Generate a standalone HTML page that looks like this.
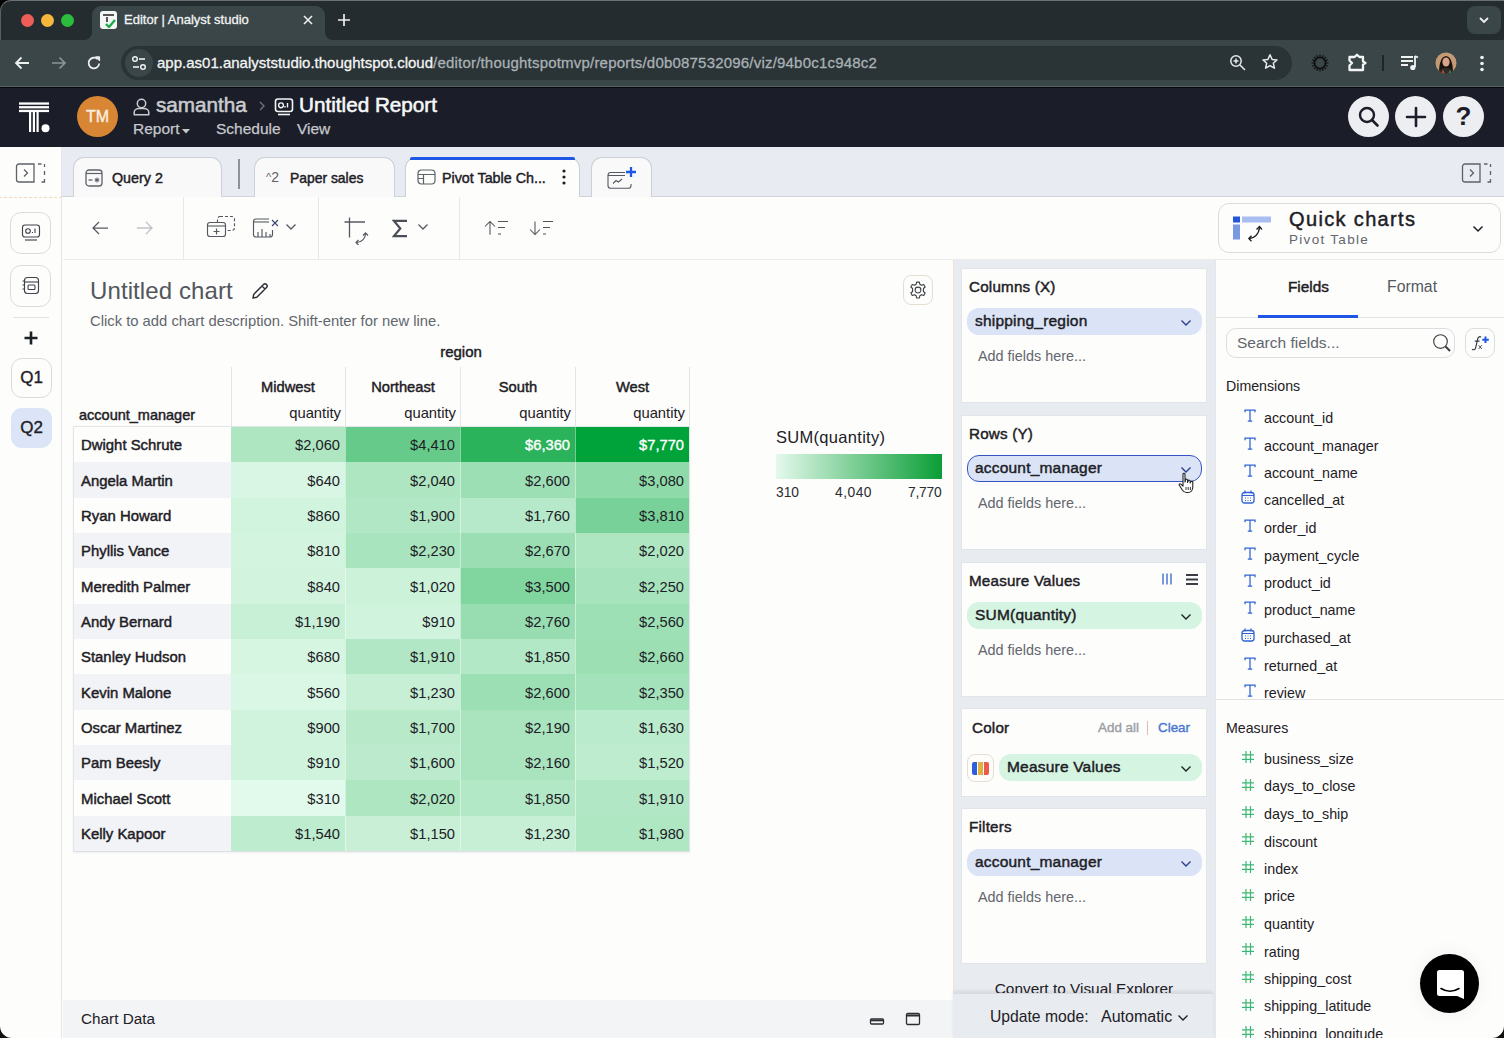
<!DOCTYPE html>
<html><head><meta charset="utf-8">
<style>
*{box-sizing:border-box;margin:0;padding:0}
html,body{width:1504px;height:1038px;overflow:hidden;background:#fdfdfc;font-family:"Liberation Sans",sans-serif;color:#1d2025}
.a{position:absolute}
svg{display:block}
/* browser chrome */
#tabbar{left:0;top:0;width:1504px;height:40px;background:#232b2e}
#toolbar{left:0;top:40px;width:1504px;height:47px;background:#3b4649;border-bottom:1px solid #56626a}
#apphdr{left:0;top:87px;width:1504px;height:60px;background:#1b1e28}
#tabsrow{left:62px;top:147px;width:1442px;height:50px;background:#e8ebf1;border-bottom:1px solid #d0d5dc}
#sidebar{left:0;top:147px;width:62px;height:891px;background:#fdfdfc;border-right:1px solid #e3e6ea}
#tbar{left:63px;top:197px;width:1441px;height:63px;background:#fdfdfc;border-bottom:1px solid #e9ebef}
#chart{left:63px;top:260px;width:890px;height:740px;background:#fdfdfc}
#chartdata{left:63px;top:1000px;width:890px;height:38px;background:#f3f4f6}
#midpanel{left:953px;top:260px;width:262px;height:778px;background:#e8ebf0}
#rightpanel{left:1215px;top:260px;width:289px;height:778px;background:#fdfdfc;border-left:1px solid #e3e6ea}

.nm{font-size:14.9px;color:#1d2025;white-space:nowrap;-webkit-text-stroke:0.45px #1d2025}
.cv{font-size:14.7px;text-align:right;padding-right:5px;white-space:nowrap}
.hd{font-size:14.7px;color:#1d2025;white-space:nowrap;-webkit-text-stroke:0.45px #1d2025}
.qt{font-size:14.8px;color:#1d2025;text-align:right;white-space:nowrap}
.lg{font-size:13.8px;color:#2a2d33;white-space:nowrap}

.ct{font-size:15.2px;letter-spacing:0.2px;color:#1d2025;white-space:nowrap;-webkit-text-stroke:0.45px #1d2025}
.pl{font-size:15.5px;letter-spacing:0.2px;color:#1d2025;white-space:nowrap;-webkit-text-stroke:0.45px #1d2025}
.af{font-size:14.4px;color:#62666d;white-space:nowrap;line-height:18px}
.fl{font-size:14.3px;color:#1d2025;white-space:nowrap;line-height:18px}
</style></head><body>

<div id="tabbar" class="a">
  <div class="a" style="left:0;top:0;width:14px;height:14px;background:#000"></div>
  <div class="a" style="left:0;top:0;width:1504px;height:60px;background:#242c30;border-top:1px solid #6a7174;border-left:1px solid #596063;border-top-left-radius:11px"></div>
  <div class="a" style="left:21px;top:14px;width:13px;height:13px;border-radius:50%;background:#ee5e56"></div>
  <div class="a" style="left:41px;top:14px;width:13px;height:13px;border-radius:50%;background:#f6b73d"></div>
  <div class="a" style="left:61px;top:14px;width:13px;height:13px;border-radius:50%;background:#2bbd3b"></div>
  <!-- active tab -->
  <div class="a" style="left:84px;top:32px;width:8px;height:8px;background:#3b4649"></div>
  <div class="a" style="left:76px;top:24px;width:16px;height:16px;background:#242c30;border-bottom-right-radius:8px"></div>
  <div class="a" style="left:325px;top:32px;width:8px;height:8px;background:#3b4649"></div>
  <div class="a" style="left:325px;top:24px;width:16px;height:16px;background:#242c30;border-bottom-left-radius:8px"></div>
  <div class="a" style="left:92px;top:6px;width:233px;height:34px;background:#3b4649;border-radius:9px 9px 0 0"></div>
  <div class="a" style="left:100px;top:11px;width:17px;height:18px;background:#f4f5f5;border-radius:3px">
    <div class="a" style="left:3px;top:3px;width:11px;height:2px;background:#555"></div>
    <div class="a" style="left:6px;top:6px;width:2px;height:5px;background:#555"></div>
    <svg class="a" style="left:5px;top:8px" width="11" height="9" viewBox="0 0 11 9"><path d="M1 5 L4 8 L10 1" stroke="#1fa94b" stroke-width="2.4" fill="none"/></svg>
  </div>
  <div class="a" style="left:124px;top:12px;font-size:13px;color:#f2f4f4;white-space:nowrap;-webkit-text-stroke:0.3px #f2f4f4">Editor | Analyst studio</div>
  <svg class="a" style="left:302px;top:14px" width="12" height="12" viewBox="0 0 12 12"><path d="M2 2L10 10M10 2L2 10" stroke="#eef0f0" stroke-width="1.6"/></svg>
  <svg class="a" style="left:337px;top:13px" width="14" height="14" viewBox="0 0 14 14"><path d="M7 1V13M1 7H13" stroke="#eef0f0" stroke-width="1.7"/></svg>
  <div class="a" style="left:1467px;top:6px;width:34px;height:28px;background:#3b4649;border-radius:8px"></div>
  <svg class="a" style="left:1478px;top:15px" width="12" height="10" viewBox="0 0 12 10"><path d="M2 3L6 7L10 3" stroke="#eef0f0" stroke-width="1.8" fill="none"/></svg>
</div>
<div id="toolbar" class="a">
  <svg class="a" style="left:14px;top:16px" width="16" height="14" viewBox="0 0 16 14"><path d="M15 7H2M7.5 1.5L2 7L7.5 12.5" stroke="#eef0f0" stroke-width="1.8" fill="none"/></svg>
  <svg class="a" style="left:51px;top:16px" width="16" height="14" viewBox="0 0 16 14"><path d="M1 7H14M8.5 1.5L14 7L8.5 12.5" stroke="#8d9699" stroke-width="1.6" fill="none"/></svg>
  <svg class="a" style="left:86px;top:15px" width="16" height="16" viewBox="0 0 16 16"><path d="M13.2 8.5A5.3 5.3 0 1 1 11.6 4.2" stroke="#eef0f0" stroke-width="1.8" fill="none"/><path d="M9.5 1.8H13.6V5.9Z" fill="#eef0f0" stroke="#eef0f0" stroke-width="1"/></svg>
  <div class="a" style="left:121px;top:6px;width:1171px;height:34px;background:#2a3336;border-radius:17px"></div>
  <div class="a" style="left:125px;top:9px;width:28px;height:28px;background:#3b4649;border-radius:50%"></div>
  <svg class="a" style="left:131px;top:15px" width="16" height="16" viewBox="0 0 16 16"><circle cx="4" cy="4" r="2.3" stroke="#eef0f0" stroke-width="1.5" fill="none"/><path d="M8 4H14" stroke="#eef0f0" stroke-width="1.6"/><circle cx="12" cy="12" r="2.3" stroke="#eef0f0" stroke-width="1.5" fill="none"/><path d="M2 12H8" stroke="#eef0f0" stroke-width="1.6"/></svg>
  <div class="a" style="left:157px;top:14px;font-size:15px;color:#f3f5f5;white-space:nowrap;line-height:18px;-webkit-text-stroke:0.3px #f3f5f5">app.as01.analyststudio.thoughtspot.cloud<span style="color:#a9b1b4;letter-spacing:0.2px;-webkit-text-stroke:0.3px #a9b1b4">/editor/thoughtspotmvp/reports/d0b087532096/viz/94b0c1c948c2</span></div>
  <svg class="a" style="left:1229px;top:14px" width="18" height="18" viewBox="0 0 18 18"><circle cx="7" cy="7" r="5.2" stroke="#e6e9ea" stroke-width="1.5" fill="none"/><path d="M11 11L16 16M4.5 7H9.5M7 4.5V9.5" stroke="#e6e9ea" stroke-width="1.5"/></svg>
  <svg class="a" style="left:1261px;top:13px" width="18" height="18" viewBox="0 0 18 18"><path d="M9 1.8L11.1 6.4L16 6.9L12.3 10.2L13.4 15.2L9 12.6L4.6 15.2L5.7 10.2L2 6.9L6.9 6.4Z" stroke="#e6e9ea" stroke-width="1.5" fill="none" stroke-linejoin="round"/></svg>
  <svg class="a" style="left:1310px;top:13px" width="20" height="20" viewBox="0 0 20 20"><circle cx="10" cy="10" r="5.6" stroke="#0d0f10" stroke-width="1.8" fill="none"/><g stroke="#0d0f10" stroke-width="1.2"><path d="M10 1.5V3.8M10 16.2V18.5M1.5 10H3.8M16.2 10H18.5M4 4L5.6 5.6M14.4 14.4L16 16M16 4L14.4 5.6M5.6 14.4L4 16"/><path d="M6.7 2.2L7.5 4.2M12.5 15.8L13.3 17.8M2.2 6.7L4.2 7.5M15.8 12.5L17.8 13.3M13.3 2.2L12.5 4.2M7.5 15.8L6.7 17.8M17.8 6.7L15.8 7.5M4.2 12.5L2.2 13.3"/></g></svg>
  <svg class="a" style="left:1347px;top:13px" width="21" height="20" viewBox="0 0 21 20"><path d="M2.5 4H7.5L10 1.8L12.5 4H16V8.5L18.5 10L16 11.5V17H2.5V12.5L5 10L2.5 7.5Z" stroke="#f4f6f6" stroke-width="2.3" fill="none" stroke-linejoin="round"/></svg>
  <div class="a" style="left:1382px;top:15px;width:1.5px;height:16px;background:#1e2528"></div>
  <svg class="a" style="left:1400px;top:14px" width="20" height="18" viewBox="0 0 20 18"><path d="M1 3H13M1 7H13M1 11H8" stroke="#f0f2f2" stroke-width="1.8"/><path d="M15 2V13" stroke="#f0f2f2" stroke-width="1.8"/><circle cx="12.8" cy="13.5" r="2.6" fill="#f0f2f2"/><path d="M15 2L18 3.5" stroke="#f0f2f2" stroke-width="1.8"/></svg>
  <svg class="a" style="left:1435px;top:12px" width="22" height="22" viewBox="0 0 22 22"><defs><clipPath id="av"><circle cx="11" cy="11" r="10.5"/></clipPath></defs><g clip-path="url(#av)"><rect width="22" height="22" fill="#c49a74"/><path d="M4 22C4 14 5 5 11 4C17 5 18 14 18 22Z" fill="#1a1210"/><ellipse cx="11" cy="10" rx="3.6" ry="4.6" fill="#d7a48a"/><path d="M3 22C4 17 7 16 11 16C15 16 18 17 19 22Z" fill="#2e2a26"/><path d="M6 22L8 17.5L10 22Z" fill="#c8463a"/><path d="M13 22L15 18L17 22Z" fill="#3f8f5a"/></g></svg>
  <svg class="a" style="left:1478px;top:14px" width="8" height="20" viewBox="0 0 8 20"><circle cx="4" cy="3.5" r="1.8" fill="#f0f2f2"/><circle cx="4" cy="9.5" r="1.8" fill="#f0f2f2"/><circle cx="4" cy="15.5" r="1.8" fill="#f0f2f2"/></svg>
</div>
<div id="apphdr" class="a">
  <div class="a" style="left:0;top:0;width:1504px;height:1px;background:#07090c"></div>
  <svg class="a" style="left:18px;top:14px" width="33" height="33" viewBox="0 0 33 33"><rect x="1" y="1.4" width="30" height="2.3" fill="#fff"/><rect x="1" y="5.1" width="30" height="2.3" fill="#fff"/><rect x="1" y="8.8" width="30" height="2.3" fill="#fff"/><rect x="11" y="10" width="2.2" height="21" fill="#fff"/><rect x="14.8" y="10" width="2.2" height="21" fill="#fff"/><rect x="18.5" y="10" width="2.2" height="21" fill="#fff"/><circle cx="27.5" cy="27.3" r="4" fill="#fff"/></svg>
  <div class="a" style="left:77px;top:9px;width:41px;height:41px;border-radius:50%;background:#d98634;color:#fbf1e2;font-size:16px;text-align:center;line-height:41px;-webkit-text-stroke:0.35px #fbf1e2">TM</div>
  <svg class="a" style="left:133px;top:11px" width="17" height="18" viewBox="0 0 17 18"><circle cx="8.5" cy="5.5" r="4.2" stroke="#c9cbcf" stroke-width="1.5" fill="none"/><path d="M1.2 16.8V14.5C1.2 12 3.5 10.5 6 10.5H11C13.5 10.5 15.8 12 15.8 14.5V16.8Z" stroke="#c9cbcf" stroke-width="1.5" fill="none" stroke-linejoin="round"/></svg>
  <div class="a" style="left:156px;top:6px;font-size:20.7px;color:#c9cbcf;white-space:nowrap;-webkit-text-stroke:0.55px #c9cbcf">samantha</div>
  <svg class="a" style="left:258px;top:13px" width="8" height="12" viewBox="0 0 8 12"><path d="M2 2L6 6L2 10" stroke="#6e737b" stroke-width="1.4" fill="none"/></svg>
  <svg class="a" style="left:274px;top:10px" width="20" height="20" viewBox="0 0 20 20"><rect x="1.5" y="2" width="17" height="12.5" rx="2.5" stroke="#f3f4f6" stroke-width="1.6" fill="none"/><circle cx="7" cy="8.3" r="2.4" stroke="#f3f4f6" stroke-width="1.4" fill="none"/><path d="M11 10.5V9M13.5 10.5V6" stroke="#f3f4f6" stroke-width="1.4"/><path d="M4 17.5H16" stroke="#f3f4f6" stroke-width="1.6"/></svg>
  <div class="a" style="left:299px;top:6px;font-size:20.7px;color:#f7f8f9;white-space:nowrap;-webkit-text-stroke:0.55px #f7f8f9">Untitled Report</div>
  <div class="a" style="left:133px;top:33px;font-size:15.5px;color:#c6c8cc;white-space:nowrap;-webkit-text-stroke:0.25px #c6c8cc">Report</div>
  <svg class="a" style="left:182px;top:42px" width="8" height="5" viewBox="0 0 8 5"><path d="M0 0H8L4 4.5Z" fill="#c6c8cc"/></svg>
  <div class="a" style="left:216px;top:33px;font-size:15.5px;color:#c6c8cc;white-space:nowrap;-webkit-text-stroke:0.25px #c6c8cc">Schedule</div>
  <div class="a" style="left:297px;top:33px;font-size:15.5px;color:#c6c8cc;white-space:nowrap;-webkit-text-stroke:0.25px #c6c8cc">View</div>
  <div class="a" style="left:1348px;top:9px;width:41px;height:41px;border-radius:50%;background:#eceef2"></div>
  <svg class="a" style="left:1357px;top:18px" width="24" height="24" viewBox="0 0 24 24"><circle cx="10" cy="10" r="7" stroke="#1b1e28" stroke-width="2.4" fill="none"/><path d="M15 15L20.5 20.5" stroke="#1b1e28" stroke-width="2.6" stroke-linecap="round"/></svg>
  <div class="a" style="left:1395px;top:9px;width:41px;height:41px;border-radius:50%;background:#eceef2"></div>
  <svg class="a" style="left:1405px;top:19px" width="22" height="22" viewBox="0 0 22 22"><path d="M11 2V20M2 11H20" stroke="#1b1e28" stroke-width="2.6" stroke-linecap="round"/></svg>
  <div class="a" style="left:1443px;top:9px;width:41px;height:41px;border-radius:50%;background:#eceef2;text-align:center;font-size:26px;font-weight:700;line-height:41px;color:#1b1e28">?</div>
</div>


<div id="sidebar" class="a">
  <svg class="a" style="left:15px;top:16px" width="32" height="20" viewBox="0 0 32 20"><path d="M19 1H4A2.5 2.5 0 0 0 1.5 3.5V16.5A2.5 2.5 0 0 0 4 19H19Z" stroke="#5d6168" stroke-width="1.3" fill="none"/><path d="M9 6.5L12.5 10L9 13.5" stroke="#5d6168" stroke-width="1.3" fill="none"/><path d="M23 1H26.5M29.5 1V4M29.5 8V12M29.5 16V19H26.5M23 19" stroke="#5d6168" stroke-width="1.3" fill="none"/></svg>
  <div class="a" style="left:-1px;top:50px;width:63px;height:0;border-top:1px dashed #f0d9bf"></div>
  <div class="a" style="left:10px;top:65px;width:41px;height:42px;border:1px solid #dedcda;border-radius:11px"></div>
  <svg class="a" style="left:20px;top:75px" width="22" height="22" viewBox="0 0 22 22"><rect x="2.5" y="3" width="17" height="12" rx="2.5" stroke="#3f434a" stroke-width="1.15" fill="none"/><circle cx="8" cy="9" r="2.3" stroke="#3f434a" stroke-width="1.1" fill="none"/><path d="M12.5 11V10M15 11V6.5" stroke="#3f434a" stroke-width="1.1"/><path d="M5 18H17" stroke="#3f434a" stroke-width="1.15"/></svg>
  <div class="a" style="left:10px;top:118px;width:41px;height:42px;border:1px solid #dedcda;border-radius:11px"></div>
  <svg class="a" style="left:20px;top:128px" width="22" height="22" viewBox="0 0 22 22"><rect x="4.5" y="2.5" width="14" height="16" rx="3" stroke="#3f434a" stroke-width="1.15" fill="none"/><path d="M4.5 7H18.5" stroke="#3f434a" stroke-width="1.1"/><rect x="8" y="10" width="7" height="4.5" rx="1" stroke="#3f434a" stroke-width="1.1" fill="none"/><path d="M2.5 6H5M2.5 10H5M2.5 14H5" stroke="#3f434a" stroke-width="1.1"/></svg>
  <div class="a" style="left:13px;top:170px;width:36px;height:1px;background:#dfe2e6"></div>
  <svg class="a" style="left:23px;top:183px" width="16" height="16" viewBox="0 0 16 16"><path d="M8 1.5V14.5M1.5 8H14.5" stroke="#1d2025" stroke-width="2.6"/></svg>
  <div class="a" style="left:11px;top:211px;width:41px;height:40px;border:1px solid #dedcda;border-radius:11px;text-align:center;line-height:38px;font-size:17px;color:#1d2025;-webkit-text-stroke:0.35px #1d2025">Q1</div>
  <div class="a" style="left:11px;top:261px;width:41px;height:40px;background:#dce5f7;border-radius:11px;text-align:center;line-height:40px;font-size:17px;color:#1d2025;-webkit-text-stroke:0.35px #1d2025">Q2</div>
</div>
<div id="tabsrow" class="a">
  <div class="a" style="left:11px;top:10px;width:149px;height:40px;background:#f9f9fa;border:1px solid #cdd1d7;border-bottom:none;border-radius:11px 11px 0 0"></div>
  <svg class="a" style="left:23px;top:22px" width="18" height="18" viewBox="0 0 18 18"><rect x="1" y="1" width="16" height="16" rx="3" stroke="#5d6168" stroke-width="1.3" fill="none"/><path d="M1 4.5H17" stroke="#5d6168" stroke-width="1.2"/><path d="M3.5 11H7.5" stroke="#5d6168" stroke-width="1.3"/><path d="M12 8.5V13.5M9.8 9.8L14.2 12.2M14.2 9.8L9.8 12.2" stroke="#5d6168" stroke-width="1.1"/></svg>
  <div class="a" style="left:50px;top:23px;font-size:14.3px;color:#1d2025;white-space:nowrap;-webkit-text-stroke:0.45px #1d2025">Query 2</div>
  <div class="a" style="left:176px;top:12px;width:2px;height:30px;background:#8e9298"></div>
  <div class="a" style="left:192px;top:10px;width:141px;height:40px;background:#f9f9fa;border:1px solid #cdd1d7;border-bottom:none;border-radius:11px 11px 0 0"></div>
  <div class="a" style="left:204px;top:22px;font-size:14px;color:#5d6168;white-space:nowrap"><span style="font-size:11px;position:relative;top:-1px">^</span>2</div>
  <div class="a" style="left:228px;top:23px;font-size:13.9px;color:#1d2025;white-space:nowrap;-webkit-text-stroke:0.45px #1d2025">Paper sales</div>
  <div class="a" style="left:343px;top:10px;width:175px;height:41px;background:#fdfdfc;border:1px solid #cdd1d7;border-bottom:none;border-radius:11px 11px 0 0"></div><div class="a" style="left:348px;top:10px;width:165px;height:2.5px;background:#1f56e6;border-radius:2px 2px 0 0"></div>
  <svg class="a" style="left:355px;top:22px" width="19" height="16" viewBox="0 0 19 16"><rect x="1" y="1" width="17" height="14" rx="3.5" stroke="#5d6168" stroke-width="1.2" fill="none"/><path d="M1 5.5H18M1 9.5H7M6.5 5.5V15" stroke="#5d6168" stroke-width="1.2"/></svg>
  <div class="a" style="left:380px;top:23px;font-size:14.3px;color:#1d2025;white-space:nowrap;-webkit-text-stroke:0.45px #1d2025">Pivot Table Ch...</div>
  <svg class="a" style="left:500px;top:22px" width="4" height="16" viewBox="0 0 4 16"><circle cx="2" cy="2" r="1.6" fill="#1d2025"/><circle cx="2" cy="8" r="1.6" fill="#1d2025"/><circle cx="2" cy="14" r="1.6" fill="#1d2025"/></svg>
  <div class="a" style="left:529px;top:10px;width:61px;height:40px;background:#f9f9fa;border:1px solid #cdd1d7;border-bottom:none;border-radius:11px 11px 0 0"></div>
  <svg class="a" style="left:544px;top:18px" width="32" height="26" viewBox="0 0 32 26"><path d="M19 7.5H4.8A2.8 2.8 0 0 0 2 10.3V20.5A2.8 2.8 0 0 0 4.8 23.3H22.2A2.8 2.8 0 0 0 25 20.5V19" stroke="#55595f" stroke-width="1.1" fill="none"/><path d="M2 10.5H19" stroke="#55595f" stroke-width="1"/><path d="M7 18.5L10 15.5L12.5 17L16 14" stroke="#55595f" stroke-width="1.1" fill="none"/><path d="M25 2V12M20 7H30" stroke="#1f56e6" stroke-width="2.3"/></svg>
  <svg class="a" style="left:1399px;top:16px" width="32" height="20" viewBox="0 0 32 20"><path d="M19 1H4A2.5 2.5 0 0 0 1.5 3.5V16.5A2.5 2.5 0 0 0 4 19H19Z" stroke="#5d6168" stroke-width="1.3" fill="none"/><path d="M9 6.5L12.5 10L9 13.5" stroke="#5d6168" stroke-width="1.3" fill="none"/><path d="M23 1H26.5M29.5 1V4M29.5 8V12M29.5 16V19H26.5M23 19" stroke="#5d6168" stroke-width="1.3" fill="none"/></svg>
</div>
<div id="tbar" class="a">
  <svg class="a" style="left:28px;top:23px" width="18" height="16" viewBox="0 0 18 16"><path d="M17 8H2M8 2L2 8L8 14" stroke="#55595f" stroke-width="1.25" fill="none"/></svg>
  <svg class="a" style="left:73px;top:23px" width="18" height="16" viewBox="0 0 18 16"><path d="M1 8H16M10 2L16 8L10 14" stroke="#c0c3c8" stroke-width="1.4" fill="none"/></svg>
  <div class="a" style="left:120px;top:0;width:1px;height:63px;background:#e6e8eb"></div>
  <svg class="a" style="left:143px;top:18px" width="32" height="24" viewBox="0 0 32 24"><rect x="11.5" y="1.5" width="17" height="14" rx="2.5" stroke="#55595f" stroke-width="1.15" stroke-dasharray="3 2" fill="none"/><rect x="1.5" y="7.5" width="18" height="14" rx="2.5" stroke="#55595f" stroke-width="1.15" fill="#fdfdfc"/><path d="M1.5 11H19.5" stroke="#55595f" stroke-width="1.1"/><path d="M10.5 13.5V19.5M7.5 16.5H13.5" stroke="#55595f" stroke-width="1.15"/></svg>
  <svg class="a" style="left:189px;top:20px" width="28" height="22" viewBox="0 0 28 22"><path d="M17 2H4A2.5 2.5 0 0 0 1.5 4.5V17.5A2.5 2.5 0 0 0 4 20H18A2.5 2.5 0 0 0 20.5 17.5V13" stroke="#55595f" stroke-width="1.15" fill="none"/><path d="M1.5 5H17" stroke="#55595f" stroke-width="1.1"/><path d="M6 20V15M10 20V12M14 20V15M18 20V17" stroke="#55595f" stroke-width="1.15"/><path d="M20 3L26 9M26 3L20 9" stroke="#3d4470" stroke-width="1.15"/></svg>
  <svg class="a" style="left:222px;top:26px" width="12" height="8" viewBox="0 0 12 8"><path d="M1.5 1.5L6 6L10.5 1.5" stroke="#55595f" stroke-width="1.3" fill="none"/></svg>
  <div class="a" style="left:255px;top:0;width:1px;height:63px;background:#e6e8eb"></div>
  <svg class="a" style="left:281px;top:20px" width="28" height="28" viewBox="0 0 28 28"><path d="M0.5 5H21M5.5 0.5V20.5" stroke="#55595f" stroke-width="1.3" fill="none"/><path d="M12.5 25.5C17.5 25.5 21.5 21.5 21.5 16.5" stroke="#55595f" stroke-width="1.2" fill="none"/><path d="M19 18.5L21.5 15.8L24 18.5M14.5 23L12 25.5L14.5 28" stroke="#55595f" stroke-width="1.2" fill="none"/></svg>
  <svg class="a" style="left:329px;top:22px" width="16" height="19" viewBox="0 0 16 19"><path d="M15 1.8H1.8L8.3 9.5L1.8 17.2H15" stroke="#4a4e55" stroke-width="2.2" fill="none" stroke-linejoin="miter"/></svg>
  <svg class="a" style="left:354px;top:26px" width="12" height="8" viewBox="0 0 12 8"><path d="M1.5 1.5L6 6L10.5 1.5" stroke="#55595f" stroke-width="1.3" fill="none"/></svg>
  <div class="a" style="left:396px;top:0;width:1px;height:63px;background:#e6e8eb"></div>
  <svg class="a" style="left:484px;top:220px;margin-left:-63px;margin-top:-197px" width="26" height="18" viewBox="0 0 26 18"><path d="M6 14.8V1.5M1 6.5L6 1.5L11 6.5" stroke="#4f535a" stroke-width="1.05" fill="none"/><path d="M14 1.5H24M14 7.5H21M14 14H17" stroke="#4f535a" stroke-width="1.05"/></svg><svg class="a" style="left:529px;top:220px;margin-left:-63px;margin-top:-197px" width="26" height="18" viewBox="0 0 26 18"><path d="M6 1.5V14.5M1 9.5L6 14.5L11 9.5" stroke="#4f535a" stroke-width="1.05" fill="none"/><path d="M14 1.5H24M14 7.5H21M14 14H17" stroke="#4f535a" stroke-width="1.05"/></svg>
  <div class="a" style="left:1155px;top:6px;width:283px;height:50px;border:1px solid #dfdcd8;border-radius:11px;background:#fdfdfc"></div>
  <svg class="a" style="left:1170px;top:18px" width="40" height="28" viewBox="0 0 40 28"><rect x="0" y="1.5" width="7" height="6" fill="#2357d8"/><rect x="9" y="1.5" width="29" height="6" fill="#a9bdf0"/><rect x="0" y="9.5" width="7" height="15" fill="#7a99e4"/><path d="M16.5 23.5C21 23.5 26 19.5 26.5 12" stroke="#1d2025" stroke-width="1.3" fill="none"/><path d="M23.5 14.5L26.5 11.5L29 14.5M18.5 20.8L15.8 23.5L18.5 26.2" stroke="#1d2025" stroke-width="1.3" fill="none"/></svg>
  <div class="a" style="left:1226px;top:11px;font-size:20px;letter-spacing:1.35px;color:#1d2025;white-space:nowrap;-webkit-text-stroke:0.45px #1d2025">Quick charts</div>
  <div class="a" style="left:1226px;top:35px;font-size:13.5px;letter-spacing:1.3px;color:#62666d;white-space:nowrap">Pivot Table</div>
  <svg class="a" style="left:1409px;top:28px" width="12" height="8" viewBox="0 0 12 8"><path d="M1.5 1.5L6 6L10.5 1.5" stroke="#1d2025" stroke-width="1.5" fill="none"/></svg>
</div>


<div id="chart" class="a">
  <div class="a" style="left:27px;top:17px;font-size:24px;color:#52565d;white-space:nowrap;letter-spacing:0.1px">Untitled chart</div>
  <svg class="a" style="left:187px;top:21px" width="20" height="20" viewBox="0 0 20 20"><path d="M3 17L3.8 13.2L13.5 3.5A2 2 0 0 1 16.5 6.5L6.8 16.2Z M12 5L15 8" stroke="#2a2d33" stroke-width="1.4" fill="none" stroke-linejoin="round"/></svg>
  <div class="a" style="left:27px;top:53px;font-size:14.8px;color:#62666d;white-space:nowrap">Click to add chart description. Shift-enter for new line.</div>
  <div class="a" style="left:840px;top:15px;width:30px;height:30px;border:1px solid #e4ddd4;border-radius:8px;background:#fdfdfc"></div>
  <svg class="a" style="left:845px;top:20px" width="20" height="20" viewBox="0 0 24 24"><path d="M12 8.5A3.5 3.5 0 1 0 12 15.5A3.5 3.5 0 1 0 12 8.5Z" stroke="#3a3d44" stroke-width="1.3" fill="none"/><path d="M10.3 2.5H13.7L14.2 5.2L16.3 6.4L18.9 5.4L20.6 8.4L18.5 10.2V13.8L20.6 15.6L18.9 18.6L16.3 17.6L14.2 18.8L13.7 21.5H10.3L9.8 18.8L7.7 17.6L5.1 18.6L3.4 15.6L5.5 13.8V10.2L3.4 8.4L5.1 5.4L7.7 6.4L9.8 5.2Z" stroke="#3a3d44" stroke-width="1.3" fill="none" stroke-linejoin="round"/></svg>
  <div class="a hd" style="left:358px;top:83px;width:80px;text-align:center;font-size:15px">region</div>
  <div class="a" style="left:168px;top:107px;width:1px;height:60px;background:#e3e5ea"></div>
  <div class="a" style="left:282px;top:107px;width:1px;height:60px;background:#e3e5ea"></div>
  <div class="a" style="left:397px;top:107px;width:1px;height:60px;background:#e3e5ea"></div>
  <div class="a" style="left:512px;top:107px;width:1px;height:60px;background:#e3e5ea"></div>
  <div class="a" style="left:626px;top:107px;width:1px;height:60px;background:#e3e5ea"></div>
  <div class="a hd" style="left:168px;top:119px;width:114px;text-align:center">Midwest</div>
  <div class="a hd" style="left:283px;top:119px;width:114px;text-align:center">Northeast</div>
  <div class="a hd" style="left:398px;top:119px;width:114px;text-align:center">South</div>
  <div class="a hd" style="left:513px;top:119px;width:113px;text-align:center">West</div>
  <div class="a qt" style="left:168px;top:145px;width:110px">quantity</div>
  <div class="a qt" style="left:283px;top:145px;width:110px">quantity</div>
  <div class="a qt" style="left:398px;top:145px;width:110px">quantity</div>
  <div class="a qt" style="left:513px;top:145px;width:109px">quantity</div>
  <div class="a hd" style="left:16px;top:147px;font-size:14.5px">account_manager</div>
  <div class="a" style="left:10px;top:166px;width:617px;height:426px;border:1px solid #e3e5ea;border-bottom:2px solid #dcdfe4;box-shadow:0 1px 2px rgba(0,0,0,0.06)"></div>
  <div class="a" style="left:11px;top:167px;width:157px;height:35px;background:#fdfdfc"></div><div class="a nm" style="left:18px;top:167px;line-height:33px;padding-top:2px">Dwight Schrute</div><div class="a cv" style="left:168px;top:167px;width:114px;height:35px;line-height:33px;padding-top:2px;background:#ade6c1;color:#1d2025">$2,060</div><div class="a cv" style="box-shadow:inset 1px 0 0 rgba(255,255,255,0.45);left:282px;top:167px;width:115px;height:35px;line-height:33px;padding-top:2px;background:#66ca8a;color:#1d2025">$4,410</div><div class="a cv" style="box-shadow:inset 1px 0 0 rgba(255,255,255,0.45);left:397px;top:167px;width:115px;height:35px;line-height:33px;padding-top:2px;background:#2bb35b;color:#ffffff;-webkit-text-stroke:0.35px #ffffff">$6,360</div><div class="a cv" style="box-shadow:inset 1px 0 0 rgba(255,255,255,0.45);left:512px;top:167px;width:114px;height:35px;line-height:33px;padding-top:2px;background:#00a33a;color:#ffffff;-webkit-text-stroke:0.35px #ffffff">$7,770</div><div class="a" style="left:11px;top:202px;width:157px;height:36px;background:#f2f3f6"></div><div class="a nm" style="left:18px;top:202px;line-height:34px;padding-top:2px">Angela Martin</div><div class="a cv" style="left:168px;top:202px;width:114px;height:36px;line-height:34px;padding-top:2px;background:#d8f6e3;color:#1d2025">$640</div><div class="a cv" style="box-shadow:inset 1px 0 0 rgba(255,255,255,0.45);left:282px;top:202px;width:115px;height:36px;line-height:34px;padding-top:2px;background:#aee6c2;color:#1d2025">$2,040</div><div class="a cv" style="box-shadow:inset 1px 0 0 rgba(255,255,255,0.45);left:397px;top:202px;width:115px;height:36px;line-height:34px;padding-top:2px;background:#9ddfb5;color:#1d2025">$2,600</div><div class="a cv" style="box-shadow:inset 1px 0 0 rgba(255,255,255,0.45);left:512px;top:202px;width:114px;height:36px;line-height:34px;padding-top:2px;background:#8edaa9;color:#1d2025">$3,080</div><div class="a" style="left:11px;top:238px;width:157px;height:35px;background:#fdfdfc"></div><div class="a nm" style="left:18px;top:238px;line-height:33px;padding-top:2px">Ryan Howard</div><div class="a cv" style="left:168px;top:238px;width:114px;height:35px;line-height:33px;padding-top:2px;background:#d1f4de;color:#1d2025">$860</div><div class="a cv" style="box-shadow:inset 1px 0 0 rgba(255,255,255,0.45);left:282px;top:238px;width:115px;height:35px;line-height:33px;padding-top:2px;background:#b2e7c5;color:#1d2025">$1,900</div><div class="a cv" style="box-shadow:inset 1px 0 0 rgba(255,255,255,0.45);left:397px;top:238px;width:115px;height:35px;line-height:33px;padding-top:2px;background:#b6e9c9;color:#1d2025">$1,760</div><div class="a cv" style="box-shadow:inset 1px 0 0 rgba(255,255,255,0.45);left:512px;top:238px;width:114px;height:35px;line-height:33px;padding-top:2px;background:#78d198;color:#1d2025">$3,810</div><div class="a" style="left:11px;top:273px;width:157px;height:35px;background:#f2f3f6"></div><div class="a nm" style="left:18px;top:273px;line-height:33px;padding-top:2px">Phyllis Vance</div><div class="a cv" style="left:168px;top:273px;width:114px;height:35px;line-height:33px;padding-top:2px;background:#d3f4df;color:#1d2025">$810</div><div class="a cv" style="box-shadow:inset 1px 0 0 rgba(255,255,255,0.45);left:282px;top:273px;width:115px;height:35px;line-height:33px;padding-top:2px;background:#a8e4bd;color:#1d2025">$2,230</div><div class="a cv" style="box-shadow:inset 1px 0 0 rgba(255,255,255,0.45);left:397px;top:273px;width:115px;height:35px;line-height:33px;padding-top:2px;background:#9bdeb3;color:#1d2025">$2,670</div><div class="a cv" style="box-shadow:inset 1px 0 0 rgba(255,255,255,0.45);left:512px;top:273px;width:114px;height:35px;line-height:33px;padding-top:2px;background:#aee6c2;color:#1d2025">$2,020</div><div class="a" style="left:11px;top:308px;width:157px;height:36px;background:#fdfdfc"></div><div class="a nm" style="left:18px;top:308px;line-height:34px;padding-top:2px">Meredith Palmer</div><div class="a cv" style="left:168px;top:308px;width:114px;height:36px;line-height:34px;padding-top:2px;background:#d2f4de;color:#1d2025">$840</div><div class="a cv" style="box-shadow:inset 1px 0 0 rgba(255,255,255,0.45);left:282px;top:308px;width:115px;height:36px;line-height:34px;padding-top:2px;background:#ccf2da;color:#1d2025">$1,020</div><div class="a cv" style="box-shadow:inset 1px 0 0 rgba(255,255,255,0.45);left:397px;top:308px;width:115px;height:36px;line-height:34px;padding-top:2px;background:#81d59f;color:#1d2025">$3,500</div><div class="a cv" style="box-shadow:inset 1px 0 0 rgba(255,255,255,0.45);left:512px;top:308px;width:114px;height:36px;line-height:34px;padding-top:2px;background:#a7e3bd;color:#1d2025">$2,250</div><div class="a" style="left:11px;top:344px;width:157px;height:35px;background:#f2f3f6"></div><div class="a nm" style="left:18px;top:344px;line-height:33px;padding-top:2px">Andy Bernard</div><div class="a cv" style="left:168px;top:344px;width:114px;height:35px;line-height:33px;padding-top:2px;background:#c7f0d6;color:#1d2025">$1,190</div><div class="a cv" style="box-shadow:inset 1px 0 0 rgba(255,255,255,0.45);left:282px;top:344px;width:115px;height:35px;line-height:33px;padding-top:2px;background:#d0f3dd;color:#1d2025">$910</div><div class="a cv" style="box-shadow:inset 1px 0 0 rgba(255,255,255,0.45);left:397px;top:344px;width:115px;height:35px;line-height:33px;padding-top:2px;background:#98ddb1;color:#1d2025">$2,760</div><div class="a cv" style="box-shadow:inset 1px 0 0 rgba(255,255,255,0.45);left:512px;top:344px;width:114px;height:35px;line-height:33px;padding-top:2px;background:#9ee0b6;color:#1d2025">$2,560</div><div class="a" style="left:11px;top:379px;width:157px;height:35px;background:#fdfdfc"></div><div class="a nm" style="left:18px;top:379px;line-height:33px;padding-top:2px">Stanley Hudson</div><div class="a cv" style="left:168px;top:379px;width:114px;height:35px;line-height:33px;padding-top:2px;background:#d7f6e2;color:#1d2025">$680</div><div class="a cv" style="box-shadow:inset 1px 0 0 rgba(255,255,255,0.45);left:282px;top:379px;width:115px;height:35px;line-height:33px;padding-top:2px;background:#b2e7c5;color:#1d2025">$1,910</div><div class="a cv" style="box-shadow:inset 1px 0 0 rgba(255,255,255,0.45);left:397px;top:379px;width:115px;height:35px;line-height:33px;padding-top:2px;background:#b3e8c6;color:#1d2025">$1,850</div><div class="a cv" style="box-shadow:inset 1px 0 0 rgba(255,255,255,0.45);left:512px;top:379px;width:114px;height:35px;line-height:33px;padding-top:2px;background:#9bdfb3;color:#1d2025">$2,660</div><div class="a" style="left:11px;top:414px;width:157px;height:36px;background:#f2f3f6"></div><div class="a nm" style="left:18px;top:414px;line-height:34px;padding-top:2px">Kevin Malone</div><div class="a cv" style="left:168px;top:414px;width:114px;height:36px;line-height:34px;padding-top:2px;background:#daf7e5;color:#1d2025">$560</div><div class="a cv" style="box-shadow:inset 1px 0 0 rgba(255,255,255,0.45);left:282px;top:414px;width:115px;height:36px;line-height:34px;padding-top:2px;background:#c6efd5;color:#1d2025">$1,230</div><div class="a cv" style="box-shadow:inset 1px 0 0 rgba(255,255,255,0.45);left:397px;top:414px;width:115px;height:36px;line-height:34px;padding-top:2px;background:#9ddfb5;color:#1d2025">$2,600</div><div class="a cv" style="box-shadow:inset 1px 0 0 rgba(255,255,255,0.45);left:512px;top:414px;width:114px;height:36px;line-height:34px;padding-top:2px;background:#a4e2bb;color:#1d2025">$2,350</div><div class="a" style="left:11px;top:450px;width:157px;height:35px;background:#fdfdfc"></div><div class="a nm" style="left:18px;top:450px;line-height:33px;padding-top:2px">Oscar Martinez</div><div class="a cv" style="left:168px;top:450px;width:114px;height:35px;line-height:33px;padding-top:2px;background:#d0f3dd;color:#1d2025">$900</div><div class="a cv" style="box-shadow:inset 1px 0 0 rgba(255,255,255,0.45);left:282px;top:450px;width:115px;height:35px;line-height:33px;padding-top:2px;background:#b8eaca;color:#1d2025">$1,700</div><div class="a cv" style="box-shadow:inset 1px 0 0 rgba(255,255,255,0.45);left:397px;top:450px;width:115px;height:35px;line-height:33px;padding-top:2px;background:#a9e4be;color:#1d2025">$2,190</div><div class="a cv" style="box-shadow:inset 1px 0 0 rgba(255,255,255,0.45);left:512px;top:450px;width:114px;height:35px;line-height:33px;padding-top:2px;background:#baebcc;color:#1d2025">$1,630</div><div class="a" style="left:11px;top:485px;width:157px;height:35px;background:#f2f3f6"></div><div class="a nm" style="left:18px;top:485px;line-height:33px;padding-top:2px">Pam Beesly</div><div class="a cv" style="left:168px;top:485px;width:114px;height:35px;line-height:33px;padding-top:2px;background:#d0f3dd;color:#1d2025">$910</div><div class="a cv" style="box-shadow:inset 1px 0 0 rgba(255,255,255,0.45);left:282px;top:485px;width:115px;height:35px;line-height:33px;padding-top:2px;background:#bbebcc;color:#1d2025">$1,600</div><div class="a cv" style="box-shadow:inset 1px 0 0 rgba(255,255,255,0.45);left:397px;top:485px;width:115px;height:35px;line-height:33px;padding-top:2px;background:#aae4bf;color:#1d2025">$2,160</div><div class="a cv" style="box-shadow:inset 1px 0 0 rgba(255,255,255,0.45);left:512px;top:485px;width:114px;height:35px;line-height:33px;padding-top:2px;background:#bdecce;color:#1d2025">$1,520</div><div class="a" style="left:11px;top:520px;width:157px;height:36px;background:#fdfdfc"></div><div class="a nm" style="left:18px;top:520px;line-height:34px;padding-top:2px">Michael Scott</div><div class="a cv" style="left:168px;top:520px;width:114px;height:36px;line-height:34px;padding-top:2px;background:#e2faeb;color:#1d2025">$310</div><div class="a cv" style="box-shadow:inset 1px 0 0 rgba(255,255,255,0.45);left:282px;top:520px;width:115px;height:36px;line-height:34px;padding-top:2px;background:#aee6c2;color:#1d2025">$2,020</div><div class="a cv" style="box-shadow:inset 1px 0 0 rgba(255,255,255,0.45);left:397px;top:520px;width:115px;height:36px;line-height:34px;padding-top:2px;background:#b3e8c6;color:#1d2025">$1,850</div><div class="a cv" style="box-shadow:inset 1px 0 0 rgba(255,255,255,0.45);left:512px;top:520px;width:114px;height:36px;line-height:34px;padding-top:2px;background:#b2e7c5;color:#1d2025">$1,910</div><div class="a" style="left:11px;top:556px;width:157px;height:35px;background:#f2f3f6"></div><div class="a nm" style="left:18px;top:556px;line-height:33px;padding-top:2px">Kelly Kapoor</div><div class="a cv" style="left:168px;top:556px;width:114px;height:35px;line-height:33px;padding-top:2px;background:#bdecce;color:#1d2025">$1,540</div><div class="a cv" style="box-shadow:inset 1px 0 0 rgba(255,255,255,0.45);left:282px;top:556px;width:115px;height:35px;line-height:33px;padding-top:2px;background:#c9f0d7;color:#1d2025">$1,150</div><div class="a cv" style="box-shadow:inset 1px 0 0 rgba(255,255,255,0.45);left:397px;top:556px;width:115px;height:35px;line-height:33px;padding-top:2px;background:#c6efd5;color:#1d2025">$1,230</div><div class="a cv" style="box-shadow:inset 1px 0 0 rgba(255,255,255,0.45);left:512px;top:556px;width:114px;height:35px;line-height:33px;padding-top:2px;background:#afe7c3;color:#1d2025">$1,980</div>
  <div class="a" style="left:713px;top:168px;font-size:16.5px;color:#1d2025;white-space:nowrap;letter-spacing:0.3px">SUM(quantity)</div>
  <div class="a" style="left:713px;top:194px;width:166px;height:25px;background:linear-gradient(90deg,#e4f9ec,#0a9e36)"></div>
  <div class="a lg" style="left:713px;top:225px">310</div>
  <div class="a lg" style="left:772px;top:225px;letter-spacing:0.5px">4,040</div>
  <div class="a lg" style="left:845px;top:225px;letter-spacing:-0.2px">7,770</div>
</div>
<div id="chartdata" class="a">
  <div class="a" style="left:18px;top:10px;font-size:15.3px;color:#1d2025;white-space:nowrap">Chart Data</div>
  <svg class="a" style="left:806px;top:14px" width="16" height="12" viewBox="0 0 16 12"><rect x="1.5" y="5" width="13" height="5" rx="1" stroke="#2a2d33" stroke-width="1.3" fill="none"/><path d="M1.5 6.5H14.5" stroke="#2a2d33" stroke-width="1.6"/></svg>
  <svg class="a" style="left:842px;top:12px" width="16" height="14" viewBox="0 0 16 14"><rect x="1.5" y="1.5" width="13" height="11" rx="1.2" stroke="#2a2d33" stroke-width="1.3" fill="none"/><path d="M1.5 3.5H14.5" stroke="#2a2d33" stroke-width="2"/></svg>
</div>

<div id="midpanel" class="a"><div class="a" style="left:0;top:0;width:1px;height:778px;border-left:1px dotted #f3dcc0"></div><div class="a" style="left:8px;top:8px;width:246px;height:135px;background:#fdfdfc;border:1px solid #e1e4e9"></div><div class="a ct" style="left:16px;top:18px">Columns (X)</div><div class="a" style="left:14px;top:48px;width:235px;height:27px;border-radius:12px;background:#dbe4f7;"></div><div class="a pl" style="left:22px;top:48px;line-height:25px">shipping_region</div><svg class="a" style="left:227px;top:59px" width="12" height="8" viewBox="0 0 12 8"><path d="M1.5 1.5L6 6L10.5 1.5" stroke="#2d3f8a" stroke-width="1.4" fill="none"/></svg><div class="a af" style="left:25px;top:87px">Add fields here...</div><div class="a" style="left:8px;top:155px;width:246px;height:135px;background:#fdfdfc;border:1px solid #e1e4e9"></div><div class="a ct" style="left:16px;top:165px">Rows (Y)</div><div class="a" style="left:14px;top:195px;width:235px;height:27px;border-radius:12px;background:#dbe4f7;border:1px solid #3553c2;"></div><div class="a pl" style="left:22px;top:195px;line-height:25px">account_manager</div><svg class="a" style="left:227px;top:206px" width="12" height="8" viewBox="0 0 12 8"><path d="M1.5 1.5L6 6L10.5 1.5" stroke="#2d3f8a" stroke-width="1.4" fill="none"/></svg><div class="a af" style="left:25px;top:234px">Add fields here...</div><div class="a" style="left:8px;top:302px;width:246px;height:135px;background:#fdfdfc;border:1px solid #e1e4e9"></div><div class="a ct" style="left:16px;top:312px">Measure Values</div><div class="a" style="left:14px;top:342px;width:235px;height:27px;border-radius:12px;background:#d6f4e2;"></div><div class="a pl" style="left:22px;top:342px;line-height:25px">SUM(quantity)</div><svg class="a" style="left:227px;top:353px" width="12" height="8" viewBox="0 0 12 8"><path d="M1.5 1.5L6 6L10.5 1.5" stroke="#1d2025" stroke-width="1.4" fill="none"/></svg><div class="a af" style="left:25px;top:381px">Add fields here...</div><svg class="a" style="left:1208px;top:313px;margin-left:-1000px" width="12" height="12" viewBox="0 0 12 12"><path d="M2 0.5V11.5M6 0.5V11.5M10 0.5V11.5" stroke="#5b7fd6" stroke-width="1.6"/></svg><svg class="a" style="left:233px;top:314px" width="12" height="11" viewBox="0 0 12 11"><path d="M0 1H12M0 5.5H12M0 10H12" stroke="#3a3d44" stroke-width="1.8"/></svg><div class="a" style="left:8px;top:448px;width:246px;height:89px;background:#fdfdfc;border:1px solid #e1e4e9"></div><div class="a ct" style="left:19px;top:459px">Color</div><div class="a" style="left:145px;top:460px;font-size:13.4px;color:#9a9ea5;white-space:nowrap;-webkit-text-stroke:0.4px #9a9ea5">Add all</div><div class="a" style="left:194px;top:461px;width:1px;height:14px;background:#e8b8b8"></div><div class="a" style="left:205px;top:460px;font-size:13.4px;color:#4b77d1;white-space:nowrap;-webkit-text-stroke:0.4px #4b77d1">Clear</div><div class="a" style="left:14px;top:494px;width:27px;height:28px;border:1px solid #e4ddd4;border-radius:8px;background:#fdfdfc"></div><div class="a" style="left:19px;top:502px;width:5px;height:13px;background:#2c5fd9;border-radius:2px 0 0 2px"></div><div class="a" style="left:25px;top:502px;width:5px;height:13px;background:#e0b040"></div><div class="a" style="left:31px;top:502px;width:5px;height:13px;background:#ea5b4b;border-radius:0 2px 2px 0"></div><div class="a" style="left:46px;top:494px;width:203px;height:27px;border-radius:12px;background:#d6f4e2;"></div><div class="a pl" style="left:54px;top:494px;line-height:25px">Measure Values</div><svg class="a" style="left:227px;top:505px" width="12" height="8" viewBox="0 0 12 8"><path d="M1.5 1.5L6 6L10.5 1.5" stroke="#1d2025" stroke-width="1.4" fill="none"/></svg><div class="a" style="left:8px;top:548px;width:246px;height:156px;background:#fdfdfc;border:1px solid #e1e4e9"></div><div class="a ct" style="left:16px;top:558px">Filters</div><div class="a" style="left:14px;top:589px;width:235px;height:27px;border-radius:12px;background:#dbe4f7;"></div><div class="a pl" style="left:22px;top:589px;line-height:25px">account_manager</div><svg class="a" style="left:227px;top:600px" width="12" height="8" viewBox="0 0 12 8"><path d="M1.5 1.5L6 6L10.5 1.5" stroke="#2d3f8a" stroke-width="1.4" fill="none"/></svg><div class="a af" style="left:25px;top:628px">Add fields here...</div><div class="a" style="left:0;top:720px;width:262px;text-align:center;font-size:15.4px;color:#1d2025;white-space:nowrap">Convert to Visual Explorer</div><div class="a" style="left:0;top:733px;width:260px;height:45px;background:#e8ebf0;box-shadow:0 -2px 3px rgba(0,0,0,0.08);border-top:1px solid #d8dbe0"></div><div class="a" style="left:37px;top:748px;font-size:15.7px;color:#1d2025;white-space:nowrap">Update mode:</div><div class="a" style="left:148px;top:748px;font-size:16px;color:#1d2025;white-space:nowrap">Automatic</div><svg class="a" style="left:224px;top:754px" width="12" height="8" viewBox="0 0 12 8"><path d="M1.5 1.5L6 6L10.5 1.5" stroke="#1d2025" stroke-width="1.4" fill="none"/></svg></div><div id="rightpanel" class="a"><div class="a" style="left:72px;top:18px;font-size:15.3px;color:#1d2025;white-space:nowrap;-webkit-text-stroke:0.45px #1d2025">Fields</div><div class="a" style="left:171px;top:18px;font-size:15.8px;color:#55595f;white-space:nowrap">Format</div><div class="a" style="left:0;top:57px;width:289px;height:1px;background:#e3e5ea"></div><div class="a" style="left:42px;top:55px;width:100px;height:2.5px;background:#1f56e6"></div><div class="a" style="left:10px;top:68px;width:229px;height:30px;border:1px solid #dcdde0;border-radius:10px;background:#fdfdfc"></div><div class="a" style="left:21px;top:74px;font-size:15.5px;color:#62666d;white-space:nowrap">Search fields...</div><svg class="a" style="left:216px;top:73px" width="20" height="20" viewBox="0 0 20 20"><circle cx="8.5" cy="8.5" r="6.8" stroke="#3a3d44" stroke-width="1.15" fill="none"/><path d="M13.5 13.5L18 18" stroke="#3a3d44" stroke-width="1.9"/></svg><div class="a" style="left:249px;top:68px;width:30px;height:30px;border:1px solid #dcdde0;border-radius:9px;background:#fdfdfc"></div><svg class="a" style="left:249px;top:68px" width="30" height="30" viewBox="0 0 30 30"><path d="M16 9.2C15 8.3 13.3 8.6 12.8 10.6L10.6 19.8C10.1 21.8 8.6 22.2 7 21.3M9.8 13.2H14.6" stroke="#3a3d44" stroke-width="1.2" fill="none"/><path d="M13.6 17.2L16.8 21M16.8 17.2L13.6 21" stroke="#3a3d44" stroke-width="0.9"/><path d="M20.5 8.5V15M17.3 11.8H23.8" stroke="#1f56e6" stroke-width="2"/></svg><div class="a" style="left:10px;top:118px;font-size:14.2px;color:#1d2025;white-space:nowrap">Dimensions</div><svg class="a" style="left:28px;top:149px" width="12" height="13" viewBox="0 0 12 13"><path d="M1 3.2V1H11V3.2M6 1V12M3.8 12H8.2" stroke="#2f63d6" stroke-width="1.25" fill="none"/></svg><div class="a fl" style="left:48px;top:149px">account_id</div><svg class="a" style="left:28px;top:177px" width="12" height="13" viewBox="0 0 12 13"><path d="M1 3.2V1H11V3.2M6 1V12M3.8 12H8.2" stroke="#2f63d6" stroke-width="1.25" fill="none"/></svg><div class="a fl" style="left:48px;top:177px">account_manager</div><svg class="a" style="left:28px;top:204px" width="12" height="13" viewBox="0 0 12 13"><path d="M1 3.2V1H11V3.2M6 1V12M3.8 12H8.2" stroke="#2f63d6" stroke-width="1.25" fill="none"/></svg><div class="a fl" style="left:48px;top:204px">account_name</div><svg class="a" style="left:25px;top:230px" width="14" height="14" viewBox="0 0 14 14"><rect x="1" y="2.5" width="12" height="10.5" rx="2.5" stroke="#2f63d6" stroke-width="1.3" fill="none"/><path d="M1 5.5H13M4 0.5V3.5M10 0.5V3.5" stroke="#2f63d6" stroke-width="1.2"/><path d="M4 8H5M6.5 8H7.5M9 8H10M4 10.5H5M6.5 10.5H7.5M9 10.5H10" stroke="#2f63d6" stroke-width="1"/></svg><div class="a fl" style="left:48px;top:231px">cancelled_at</div><svg class="a" style="left:28px;top:259px" width="12" height="13" viewBox="0 0 12 13"><path d="M1 3.2V1H11V3.2M6 1V12M3.8 12H8.2" stroke="#2f63d6" stroke-width="1.25" fill="none"/></svg><div class="a fl" style="left:48px;top:259px">order_id</div><svg class="a" style="left:28px;top:287px" width="12" height="13" viewBox="0 0 12 13"><path d="M1 3.2V1H11V3.2M6 1V12M3.8 12H8.2" stroke="#2f63d6" stroke-width="1.25" fill="none"/></svg><div class="a fl" style="left:48px;top:287px">payment_cycle</div><svg class="a" style="left:28px;top:314px" width="12" height="13" viewBox="0 0 12 13"><path d="M1 3.2V1H11V3.2M6 1V12M3.8 12H8.2" stroke="#2f63d6" stroke-width="1.25" fill="none"/></svg><div class="a fl" style="left:48px;top:314px">product_id</div><svg class="a" style="left:28px;top:341px" width="12" height="13" viewBox="0 0 12 13"><path d="M1 3.2V1H11V3.2M6 1V12M3.8 12H8.2" stroke="#2f63d6" stroke-width="1.25" fill="none"/></svg><div class="a fl" style="left:48px;top:341px">product_name</div><svg class="a" style="left:25px;top:368px" width="14" height="14" viewBox="0 0 14 14"><rect x="1" y="2.5" width="12" height="10.5" rx="2.5" stroke="#2f63d6" stroke-width="1.3" fill="none"/><path d="M1 5.5H13M4 0.5V3.5M10 0.5V3.5" stroke="#2f63d6" stroke-width="1.2"/><path d="M4 8H5M6.5 8H7.5M9 8H10M4 10.5H5M6.5 10.5H7.5M9 10.5H10" stroke="#2f63d6" stroke-width="1"/></svg><div class="a fl" style="left:48px;top:369px">purchased_at</div><svg class="a" style="left:28px;top:397px" width="12" height="13" viewBox="0 0 12 13"><path d="M1 3.2V1H11V3.2M6 1V12M3.8 12H8.2" stroke="#2f63d6" stroke-width="1.25" fill="none"/></svg><div class="a fl" style="left:48px;top:397px">returned_at</div><svg class="a" style="left:28px;top:424px" width="12" height="13" viewBox="0 0 12 13"><path d="M1 3.2V1H11V3.2M6 1V12M3.8 12H8.2" stroke="#2f63d6" stroke-width="1.25" fill="none"/></svg><div class="a fl" style="left:48px;top:424px">review</div><div class="a" style="left:0;top:439px;width:289px;height:1px;background:#dfe1e5"></div><div class="a" style="left:10px;top:460px;font-size:14.2px;color:#1d2025;white-space:nowrap">Measures</div><svg class="a" style="left:25px;top:490px" width="14" height="14" viewBox="0 0 14 14"><path d="M5 1V13M9.5 1V13M1 4.8H13M1 9.3H13" stroke="#3db872" stroke-width="1.2"/></svg><div class="a fl" style="left:48px;top:490px">business_size</div><svg class="a" style="left:25px;top:518px" width="14" height="14" viewBox="0 0 14 14"><path d="M5 1V13M9.5 1V13M1 4.8H13M1 9.3H13" stroke="#3db872" stroke-width="1.2"/></svg><div class="a fl" style="left:48px;top:517px">days_to_close</div><svg class="a" style="left:25px;top:545px" width="14" height="14" viewBox="0 0 14 14"><path d="M5 1V13M9.5 1V13M1 4.8H13M1 9.3H13" stroke="#3db872" stroke-width="1.2"/></svg><div class="a fl" style="left:48px;top:545px">days_to_ship</div><svg class="a" style="left:25px;top:572px" width="14" height="14" viewBox="0 0 14 14"><path d="M5 1V13M9.5 1V13M1 4.8H13M1 9.3H13" stroke="#3db872" stroke-width="1.2"/></svg><div class="a fl" style="left:48px;top:573px">discount</div><svg class="a" style="left:25px;top:600px" width="14" height="14" viewBox="0 0 14 14"><path d="M5 1V13M9.5 1V13M1 4.8H13M1 9.3H13" stroke="#3db872" stroke-width="1.2"/></svg><div class="a fl" style="left:48px;top:600px">index</div><svg class="a" style="left:25px;top:628px" width="14" height="14" viewBox="0 0 14 14"><path d="M5 1V13M9.5 1V13M1 4.8H13M1 9.3H13" stroke="#3db872" stroke-width="1.2"/></svg><div class="a fl" style="left:48px;top:627px">price</div><svg class="a" style="left:25px;top:655px" width="14" height="14" viewBox="0 0 14 14"><path d="M5 1V13M9.5 1V13M1 4.8H13M1 9.3H13" stroke="#3db872" stroke-width="1.2"/></svg><div class="a fl" style="left:48px;top:655px">quantity</div><svg class="a" style="left:25px;top:682px" width="14" height="14" viewBox="0 0 14 14"><path d="M5 1V13M9.5 1V13M1 4.8H13M1 9.3H13" stroke="#3db872" stroke-width="1.2"/></svg><div class="a fl" style="left:48px;top:683px">rating</div><svg class="a" style="left:25px;top:710px" width="14" height="14" viewBox="0 0 14 14"><path d="M5 1V13M9.5 1V13M1 4.8H13M1 9.3H13" stroke="#3db872" stroke-width="1.2"/></svg><div class="a fl" style="left:48px;top:710px">shipping_cost</div><svg class="a" style="left:25px;top:738px" width="14" height="14" viewBox="0 0 14 14"><path d="M5 1V13M9.5 1V13M1 4.8H13M1 9.3H13" stroke="#3db872" stroke-width="1.2"/></svg><div class="a fl" style="left:48px;top:737px">shipping_latitude</div><svg class="a" style="left:25px;top:765px" width="14" height="14" viewBox="0 0 14 14"><path d="M5 1V13M9.5 1V13M1 4.8H13M1 9.3H13" stroke="#3db872" stroke-width="1.2"/></svg><div class="a fl" style="left:48px;top:765px">shipping_longitude</div><div class="a" style="left:204px;top:694px;width:59px;height:59px;border-radius:50%;background:#000;box-shadow:0 0 20px rgba(0,0,0,0.06)"></div><svg class="a" style="left:221px;top:709px" width="28" height="31" viewBox="0 0 28 31"><path d="M2.5 1H24.5A2.5 2.5 0 0 1 27 3.5V30L20 27H2.5A2.5 2.5 0 0 1 0 24.5V3.5A2.5 2.5 0 0 1 2.5 1Z" fill="#fff"/><path d="M4 19.5Q13 25 22 19.5" stroke="#000" stroke-width="1.6" fill="none" stroke-linecap="round"/></svg></div>

<svg class="a" style="left:1177px;top:472px" width="20" height="22" viewBox="0 0 20 22"><path d="M6 2.2C6 1 8 1 8 2.2V10L8.6 7.8C9 6.8 10.6 7 10.6 8.2V10.5L11.2 8.8C11.6 7.8 13.2 8 13.2 9.2V11L13.8 9.8C14.3 9 15.8 9.3 15.8 10.4V15C15.8 18 14 20.5 11 20.5H9.5C7.5 20.5 6.3 19.5 5.3 18L2.3 13.3C1.7 12.3 2.9 11.3 3.8 12.1L6 14.2Z" fill="#fff" stroke="#222" stroke-width="1.1" stroke-linejoin="round"/><path d="M9 15V18M11.2 15V18M13.4 15V18" stroke="#222" stroke-width="0.9"/></svg>
<svg class="a" style="left:0;top:1026px" width="12" height="12" viewBox="0 0 12 12"><path d="M0 0A12 12 0 0 0 12 12H0Z" fill="#111"/></svg>
<svg class="a" style="left:1492px;top:1026px" width="12" height="12" viewBox="0 0 12 12"><path d="M12 0A12 12 0 0 1 0 12H12Z" fill="#111"/></svg>
</body></html>
